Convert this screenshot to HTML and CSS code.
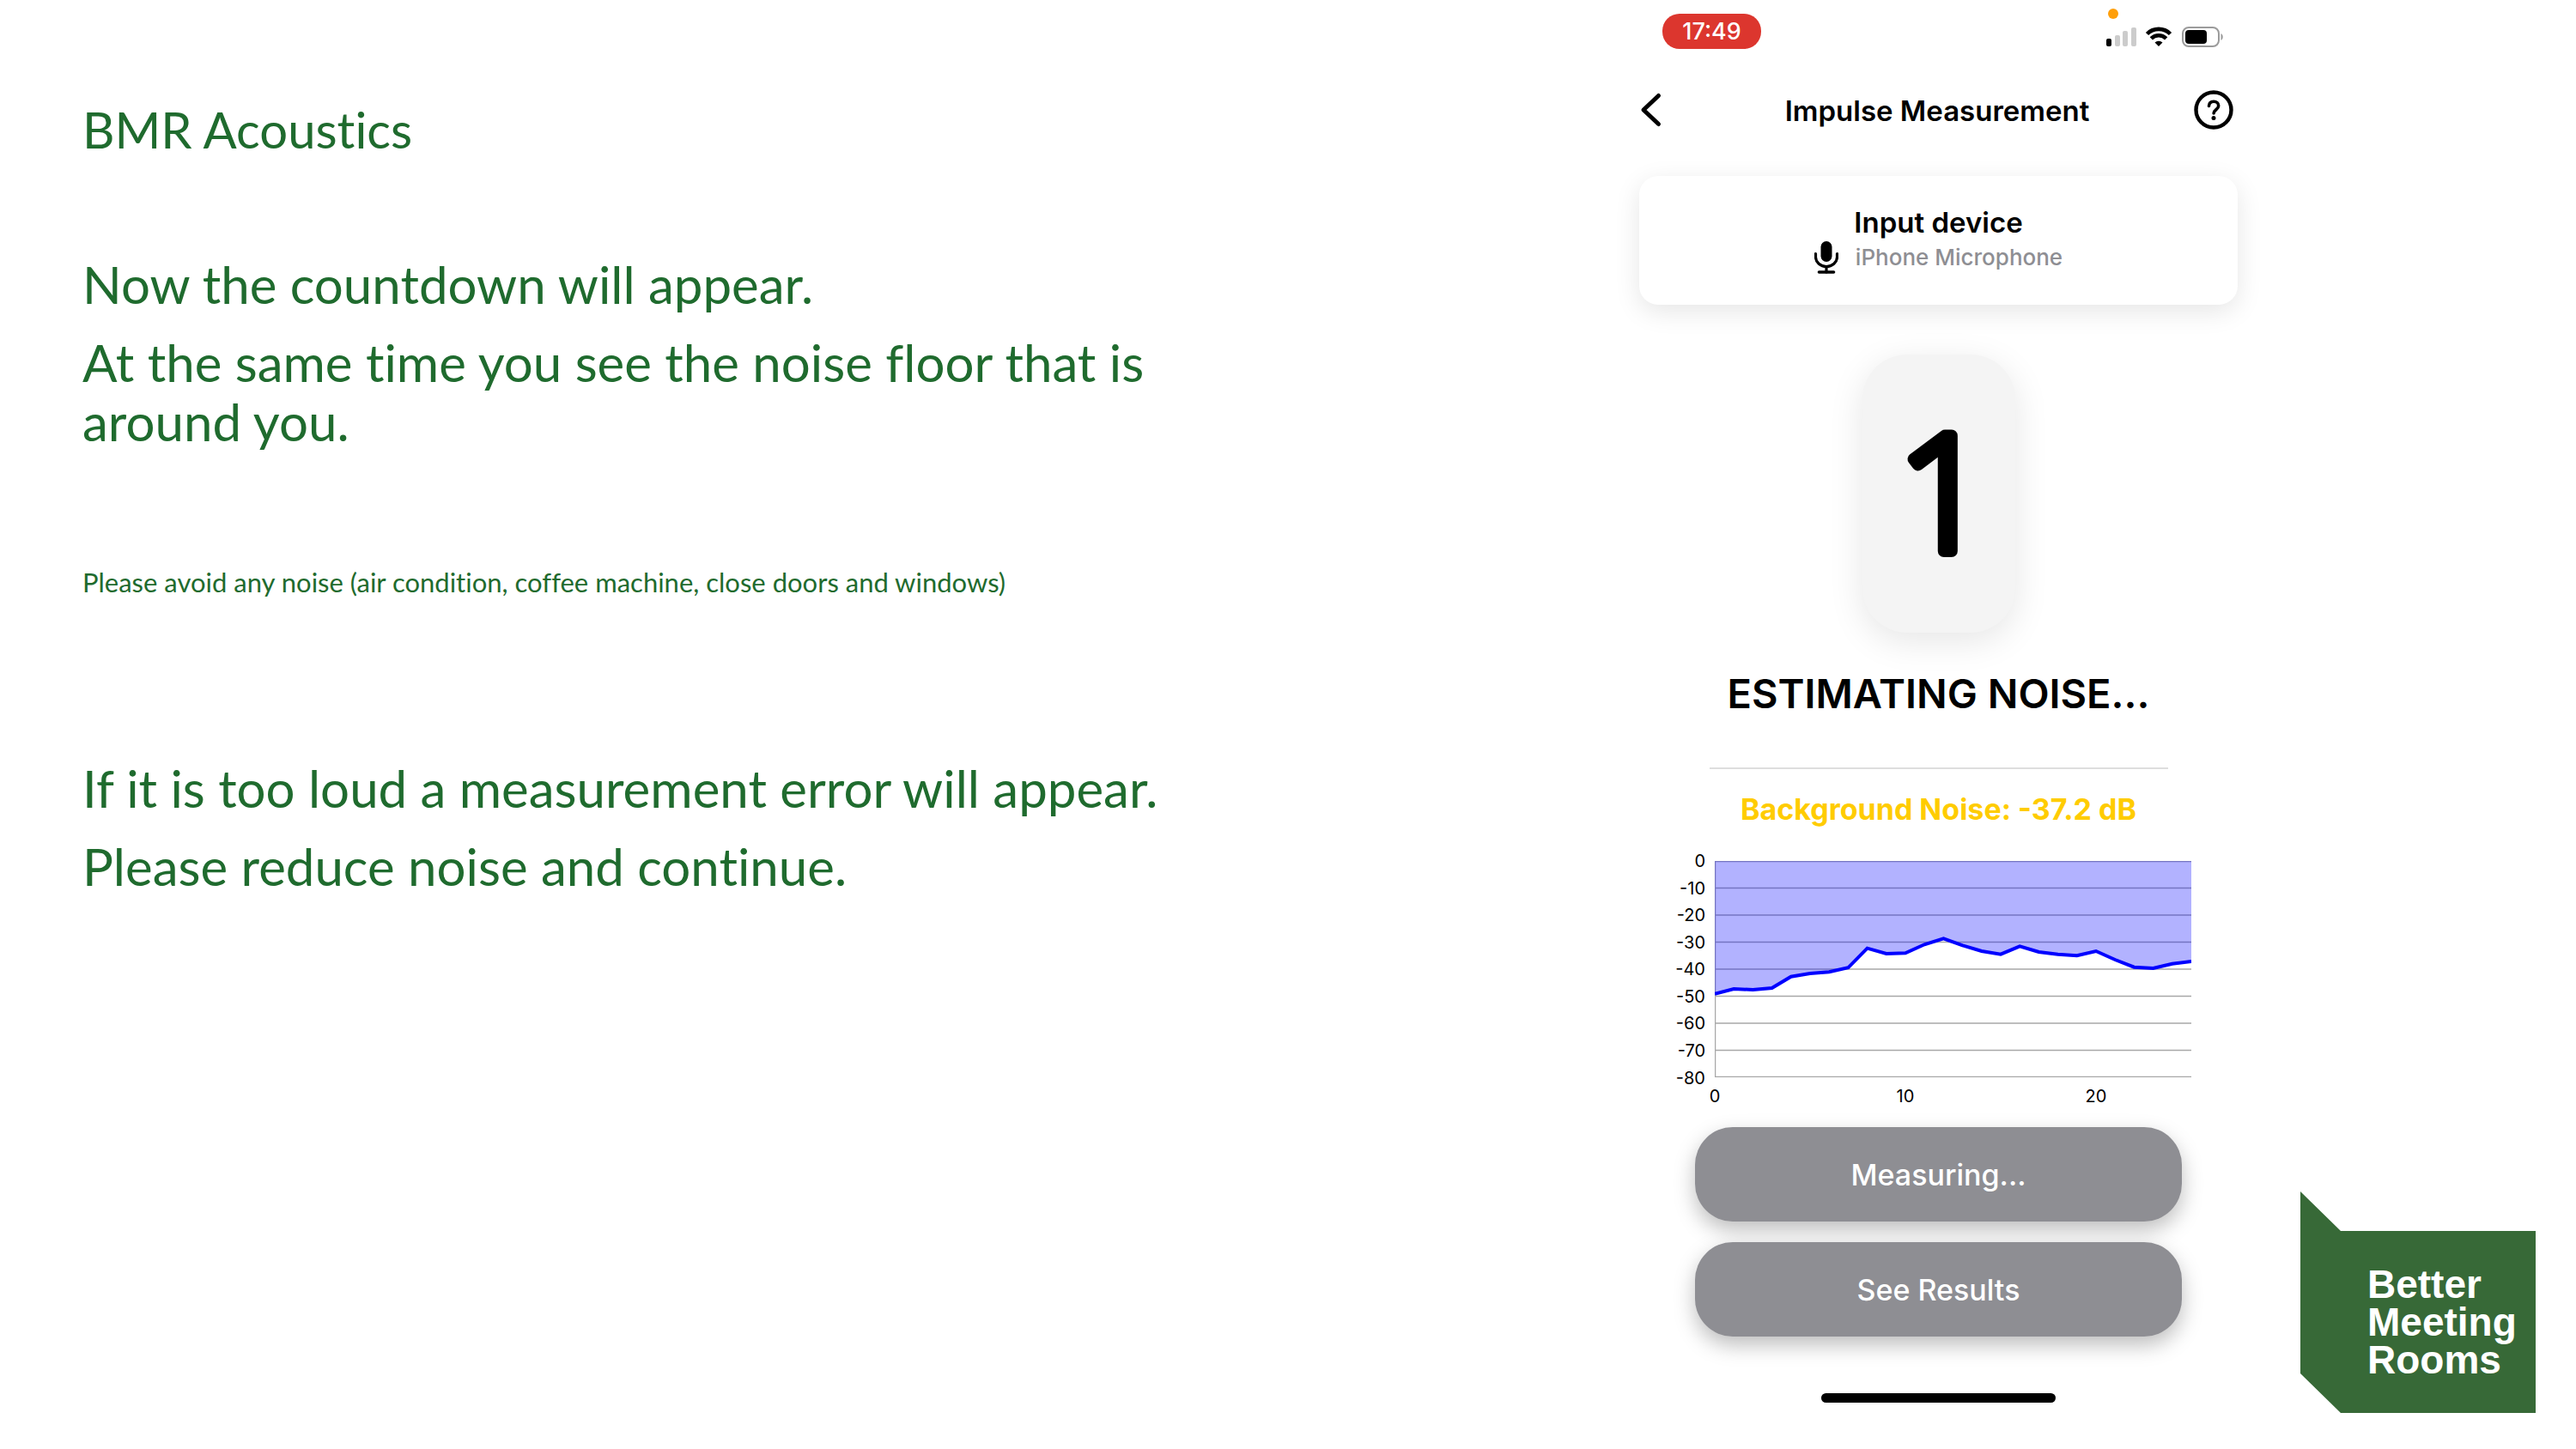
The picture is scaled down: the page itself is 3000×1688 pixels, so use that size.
FILE: index.html
```html
<!DOCTYPE html>
<html lang="en">
<head>
<meta charset="utf-8">
<title>BMR Acoustics</title>
<meta name="viewport" content="width=device-width, initial-scale=1">
<link rel="stylesheet" href="styles.css">
</head>
<body>
<main class="slide">
  <section class="copy">
    <h1 class="copy-title">BMR Acoustics</h1>
    <div class="copy-group">
      <p>Now the countdown will appear.</p>
      <p>At the same time you see the noise floor that is<br>around you.</p>
    </div>
    <p class="copy-note">Please avoid any noise (air condition, coffee machine, close doors and windows)</p>
    <div class="copy-group">
      <p>If it is too loud a measurement error will appear.</p>
      <p>Please reduce noise and continue.</p>
    </div>
  </section>

  <section class="phone" aria-label="Impulse Measurement">
    <div class="status">
      <span class="clock">17:49</span>
      <svg class="status-icons" width="140" height="50" viewBox="0 0 140 50" aria-hidden="true">
        <circle cx="11" cy="8" r="6" fill="#ff9f0a"/>
        <rect x="3" y="37" width="6" height="9" rx="2"/>
        <g fill="#cccccc">
          <rect x="13" y="33" width="6" height="13" rx="2"/>
          <rect x="22" y="28" width="6" height="18" rx="2"/>
          <rect x="32" y="24" width="6" height="22" rx="2"/>
        </g>
        <g fill="none" stroke="#000" stroke-width="4.6">
          <path d="M50.500 31.500a19 19 0 0 1 27 0"/>
          <path d="M55.300 36.800a12.400 12.400 0 0 1 17.400 0"/>
        </g>
        <path d="M59.500 41.500a6.500 6.500 0 0 1 9 0L64 46z"/>
        <rect x="92" y="24" width="42" height="22" rx="7" fill="none" stroke="#9b9b9b" stroke-width="2"/>
        <rect x="95" y="27" width="25" height="16" rx="4"/>
        <path d="M136.500 31c3 1.500 3 6.500 0 8z" fill="#9b9b9b"/>
      </svg>
    </div>

    <header class="nav">
      <button class="icon-button" type="button" aria-label="Back">
        <svg width="28" height="46" viewBox="0 0 28 46"><path d="M22.500 6.500L5 23l17.500 16.500" fill="none" stroke="#000" stroke-width="5" stroke-linecap="round" stroke-linejoin="round"/></svg>
      </button>
      <h2 class="nav-title">Impulse Measurement</h2>
      <button class="icon-button" type="button" aria-label="Help">
        <svg width="46" height="46" viewBox="0 0 46 46">
          <circle cx="23" cy="23" r="20.500" fill="none" stroke="#000" stroke-width="4.400"/>
          <path d="M17.500 18.500c.2-3.500 2.600-5.200 5.600-5.200 3.200 0 5.600 2 5.600 4.900 0 4.500-5.600 4.600-5.600 8.800" fill="none" stroke="#000" stroke-width="3.600" stroke-linecap="round"/>
          <circle cx="23" cy="32.500" r="2.500"/>
        </svg>
      </button>
    </header>

    <div class="device">
      <h3 class="device-title">Input device</h3>
      <p class="device-name">
        <svg width="28" height="38" viewBox="0 0 28 38" aria-hidden="true">
          <rect x="7.500" y="0" width="13" height="24" rx="6.500"/>
          <path d="M1.500 14.500v4a12.500 11 0 0 0 25 0v-4M14 30v6" fill="none" stroke="#000" stroke-width="3.200" stroke-linecap="round"/>
          <path d="M5.500 36h17" stroke="#000" stroke-width="3.600" stroke-linecap="round"/>
        </svg>
        iPhone Microphone
      </p>
    </div>

    <div class="counter">
      <svg width="178" height="324" viewBox="0 0 178 324">
        <text class="counter-digit" x="95" y="229" text-anchor="middle">1</text>
      </svg>
    </div>

    <p class="state">ESTIMATING NOISE...</p>
    <hr class="rule">
    <p class="level">Background Noise: -37.2 dB</p>

    <div class="chart">
      <ul class="axis-y">
        <li>0</li><li>-10</li><li>-20</li><li>-30</li><li>-40</li><li>-50</li><li>-60</li><li>-70</li><li>-80</li>
      </ul>
      <div class="plot">
        <svg class="plot-area" viewBox="0 0 555 252" preserveAspectRatio="none" role="img" aria-label="Noise level over time">
          <path d="M0 .5H555M0 31.500H555M0 63H555M0 94.500H555M0 126H555M0 157.500H555M0 189H555M0 220.500H555M0 251.500H555M.5 0V252" fill="none" stroke="#a8a8a8" stroke-width="1.500"/>
          <path d="M0 0V154.700L22.200 149 44.400 150 66.600 148 88.800 134.700 111 131 133.200 129.300 155.400 124.300 177.600 101.700 199.800 108 222 107.300 244.200 97.300 266.400 90.300 288.600 98.300 310.800 105 333 108.700 355.200 99.300 377.400 106 399.600 108.700 421.800 110.300 444 105 466.200 115 488.400 123.700 510.600 125 532.800 119.700 555 117V0z" fill="#0000ff" fill-opacity=".3"/>
          <path d="M0 154.700L22.200 149 44.400 150 66.600 148 88.800 134.700 111 131 133.200 129.300 155.400 124.300 177.600 101.700 199.800 108 222 107.300 244.200 97.300 266.400 90.300 288.600 98.300 310.800 105 333 108.700 355.200 99.300 377.400 106 399.600 108.700 421.800 110.300 444 105 466.200 115 488.400 123.700 510.600 125 532.800 119.700 555 117" fill="none" stroke="#0000ff" stroke-width="4"/>
        </svg>
        <ul class="axis-x"><li>0</li><li>10</li><li>20</li></ul>
      </div>
    </div>

    <div class="actions">
      <button class="action" type="button">Measuring...</button>
      <button class="action" type="button">See Results</button>
    </div>
    <div class="home-bar"></div>
  </section>

  <aside class="brand">
    <p class="brand-name">Better<br>Meeting<br>Rooms</p>
  </aside>
</main>
</body>
</html>
```
FILE: styles.css
```css
* { box-sizing: border-box; }

body {
  margin: 0;
  background: #fff;
  color: #000;
  font-family: Inter, "Liberation Sans", sans-serif;
}

h1, h2, h3, p, ul { margin: 0; padding: 0; font-weight: 400; }
ul { list-style: none; }
svg { display: block; }

button {
  border: 0;
  padding: 0;
  background: none;
  font: inherit;
  cursor: pointer;
}

.slide {
  display: grid;
  grid-template-columns: minmax(0, 1909fr) 697px minmax(0, 394fr);
  min-height: 100vh;
}

/* Instructions */
.copy {
  padding: 116px 40px 0 96px;
  color: #1f6b2e;
  font-family: Lato, "Open Sans", sans-serif;
  font-size: 60px;
  font-variant-ligatures: none;
  line-height: 69px;
}
.copy-title {
  margin-bottom: 112px;
  font-size: 58px;
  line-height: 69px;
}
.copy-group p + p { margin-top: 22px; }
.copy-note {
  margin: 134px 0 188px;
  font-size: 31px;
  line-height: 36px;
}

/* Phone screen */
.phone {
  display: flex;
  flex-direction: column;
  padding-top: 8px;
}
.status {
  display: flex;
  justify-content: space-between;
  height: 50px;
  padding: 0 16px 0 27px;
}
.clock {
  width: 115px;
  height: 41px;
  margin-top: 8px;
  border-radius: 20px;
  background: #dc362e;
  color: #fff;
  font-size: 27px;
  font-weight: 500;
  line-height: 41px;
  text-align: center;
}
.nav {
  display: flex;
  align-items: center;
  justify-content: space-between;
  margin-top: 47px;
  padding-right: 5px;
}
.icon-button { display: flex; }
.nav-title {
  padding: 2px 0 0 20px;
  font-size: 33px;
  font-weight: 600;
  line-height: 44px;
}
.device {
  display: flex;
  flex-direction: column;
  align-items: center;
  height: 150px;
  margin-top: 54px;
  padding-top: 33px;
  border-radius: 22px;
  background: #fff;
  box-shadow: 0 8px 30px rgba(0, 0, 0, .1);
}
.device-title {
  font-size: 33px;
  font-weight: 600;
  line-height: 42px;
}
.device-name {
  display: flex;
  align-items: center;
  gap: 20px;
  color: #8e8e93;
  font-size: 26px;
  font-weight: 500;
  line-height: 40px;
}
.counter {
  align-self: center;
  margin-top: 58px;
  border-radius: 52px;
  background: #f4f4f4;
  box-shadow: 0 10px 40px rgba(0, 0, 0, .1);
}
.counter-digit {
  font-family: "Open Sans", sans-serif;
  font-size: 188px;
  font-weight: 300;
  stroke: #000;
  stroke-width: 14px;
  stroke-linejoin: round;
}
.state {
  margin-top: 41px;
  font-size: 47px;
  font-weight: 600;
  line-height: 60px;
  text-align: center;
}
.rule {
  width: 534px;
  height: 2px;
  margin: 56px auto 0;
  border: 0;
  background: #dedede;
}
.level {
  margin-top: 26px;
  color: #fc0;
  font-size: 34px;
  font-weight: 700;
  line-height: 42px;
  text-align: center;
}
.chart {
  display: flex;
  gap: 11px;
  height: 302px;
  margin-top: 24px;
  padding: 0 54px 0 27px;
  font-size: 20px;
}
.axis-y {
  display: flex;
  flex-direction: column;
  width: 50px;
  height: 284px;
  text-align: right;
}
.axis-y li {
  flex: 1;
  line-height: 30px;
}
.plot {
  flex: 1;
  padding-top: 15px;
}
.plot-area {
  width: 100%;
  height: 252px;
}
.axis-x {
  display: flex;
  margin-top: 9px;
}
.axis-x li {
  flex: 0 0 40%;
  line-height: 26px;
  text-align: center;
  translate: -50%;
}
.actions {
  display: flex;
  flex-direction: column;
  gap: 24px;
  margin-top: 23px;
  padding: 0 65px;
}
.action {
  height: 110px;
  border-radius: 44px;
  background: #8e8e93;
  box-shadow: 0 10px 24px rgba(0, 0, 0, .26);
  color: #fff;
  font-size: 34px;
  font-weight: 500;
}
.home-bar {
  align-self: center;
  width: 273px;
  height: 11px;
  margin-top: 66px;
  border-radius: 6px;
  background: #000;
}

/* Logo */
.brand {
  align-self: end;
  justify-self: end;
  width: 274px;
  height: 258px;
  margin: 0 47px 42px 0;
  padding: 86px 0 0 78px;
  background: #376937;
  clip-path: polygon(0 0, 47px 46px, 100% 46px, 100% 100%, 47px 100%, 0 212px);
  color: #fff;
}
.brand-name {
  font-family: "Liberation Sans", sans-serif;
  font-size: 46px;
  font-weight: 700;
  line-height: 44px;
}
```
